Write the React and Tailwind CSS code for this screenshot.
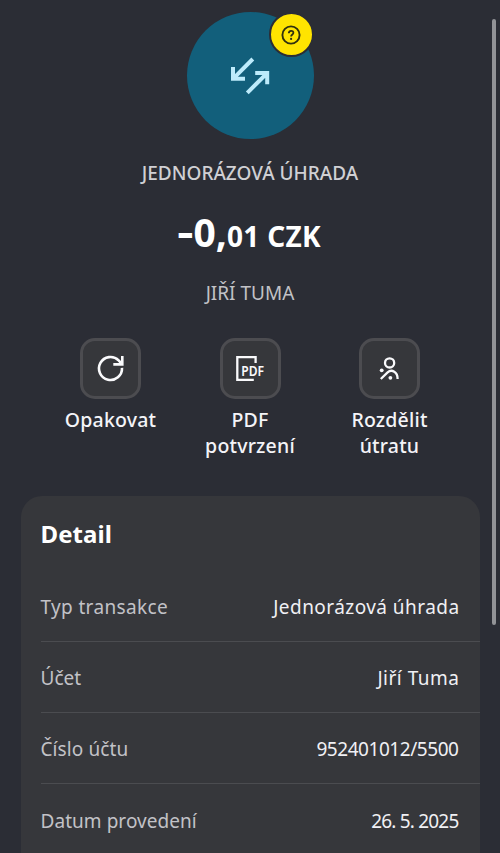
const rows = [
  { label: 'Typ transakce', value: 'Jednorázová úhrada', labelClass: 'tracking-[0.35px]', valueClass: 'tracking-[0.45px]' },
  { label: 'Účet', value: 'Jiří Tuma', labelClass: 'tracking-[0px]', valueClass: 'tracking-[0.5px]' },
  { label: 'Číslo účtu', value: '952401012/5500', labelClass: 'tracking-[0.1px]', valueClass: 'tracking-[-0.45px] pr-px' },
  { label: 'Datum provedení', value: '26. 5. 2025', labelClass: 'tracking-[0.05px]', valueClass: 'tracking-[-0.8px] pr-px' },
];

function RepeatIcon() {
  return (
    <svg width="61" height="61" viewBox="0 0 61 61" fill="none" stroke="#fafafc" strokeWidth="2.6">
      <path d="M42 29.9A11.5 11.5 0 1 1 38.6 22.3L41.4 25.4" />
      <path d="M42.3 18V26.4H33.3" />
    </svg>
  );
}

function PdfIcon() {
  return (
    <svg width="61" height="61" viewBox="0 0 61 61" fill="none" stroke="#fafafc" strokeWidth="2.3">
      <path d="M35.6 25V19.1H17.3V41.9H33.8" />
      <text x="21.2" y="37.8" fontSize="13.6" fontWeight="600" fontFamily="'Noto Sans', sans-serif" textLength="22.8" lengthAdjust="spacingAndGlyphs" fill="#fafafc" stroke="none">PDF</text>
    </svg>
  );
}

function SplitIcon() {
  return (
    <svg width="61" height="61" viewBox="0 0 61 61" fill="none" stroke="#fafafc" strokeWidth="2.3">
      <circle cx="30.6" cy="24.9" r="4.6" />
      <path d="M21.8 41L28.6 34.4C32.8 30.6 38.8 34 38.6 41" />
      <circle cx="22.7" cy="32.3" r="1.9" fill="#fafafc" stroke="none" />
      <circle cx="31.4" cy="39.8" r="1.9" fill="#fafafc" stroke="none" />
    </svg>
  );
}

function Action({ icon, children }) {
  return (
    <button className="flex w-[139.5px] flex-col items-center">
      <span className="flex h-[61px] w-[61px] items-center justify-center overflow-hidden rounded-[15px] border-3 border-[#4c4c50] bg-[#36373b]">
        <span className="-m-[3px] shrink-0">{icon}</span>
      </span>
      <span className="mt-2 text-center text-[19.5px] leading-[26px] font-medium tracking-[0.2px] text-[#f4f4f8]">{children}</span>
    </button>
  );
}

export default function App() {
  return (
    <div className="relative flex h-[853px] w-[500px] flex-col items-center overflow-hidden bg-[#2b2d35] font-['Noto_Sans','Lato',sans-serif]">
      <div className="relative mt-3 h-[127px] w-[127px] shrink-0 rounded-full bg-[#125f7b]">
        <svg className="h-full w-full" viewBox="0 0 127 127" fill="none" stroke="#bdebfb" strokeWidth="4">
          <path d="M65.8 47L46.5 66.3M46 55V66.8H58" />
          <path d="M60.3 80.9L79.6 61.6M68.2 61H80.2V72.2" />
        </svg>
        <div className="absolute top-0 left-[82px] flex h-[45px] w-[45px] items-center justify-center rounded-full border-2 border-[#2b2d35] bg-[#ffe400]">
          <svg width="20" height="20" viewBox="0 0 20 20" fill="none" stroke="#30300f" strokeWidth="1.9">
            <circle cx="10" cy="10" r="8.6" />
            <path d="M7.8 8.2C7.8 5.1 12.4 5.1 12.4 7.8C12.4 9.5 10.1 9.4 10.1 11.5" strokeWidth="1.8" />
            <circle cx="10.1" cy="13.9" r="1.1" fill="#30300f" stroke="none" />
          </svg>
        </div>
      </div>

      <div className="mt-[21px] h-[26px] text-[19px] leading-[26px] font-medium text-[#d0d0d4]">JEDNORÁZOVÁ ÚHRADA</div>
      <div className="mt-[22px] flex h-[48px] items-baseline font-bold whitespace-pre text-white">
        <span className="mr-[2px] inline-block -translate-y-px scale-x-130 text-[39px] leading-[48px]">-</span>
        <span className="text-[39px] leading-[48px]">0,</span>
        <span className="text-[28px] leading-[48px] tracking-[0.3px]">01 CZK</span>
      </div>
      <div className="mt-6 h-[26px] text-[19px] leading-[26px] text-[#c2c2c6]">JIŘÍ TUMA</div>

      <div className="mt-8 flex h-[122px] shrink-0 items-start">
        <Action icon={<RepeatIcon />}>Opakovat</Action>
        <Action icon={<PdfIcon />}>PDF<br />potvrzení</Action>
        <Action icon={<SplitIcon />}>Rozdělit<br />útratu</Action>
      </div>

      <div className="mt-9 h-[357px] w-[459px] shrink-0 rounded-t-[21px] bg-[#36373b] pl-5">
        <h2 className="pt-[23px] text-[24px] leading-[30px] font-bold tracking-[0.1px] text-white">Detail</h2>
        <div className="mt-[21.6px]">
          {rows.map((row) => (
            <div key={row.label} className="flex h-[71.2px] items-center justify-between border-b-[1.5px] border-[#4b4c50] pt-[2.5px] pr-5 text-[19px] leading-[26px]">
              <span className={'text-[#c2c2c7] ' + row.labelClass}>{row.label}</span>
              <span className={'text-[#f0f0f4] ' + row.valueClass}>{row.value}</span>
            </div>
          ))}
        </div>
      </div>

      <div className="absolute top-[19px] left-[492px] h-[606px] w-1 rounded-full bg-[#929397]" />
    </div>
  );
}
